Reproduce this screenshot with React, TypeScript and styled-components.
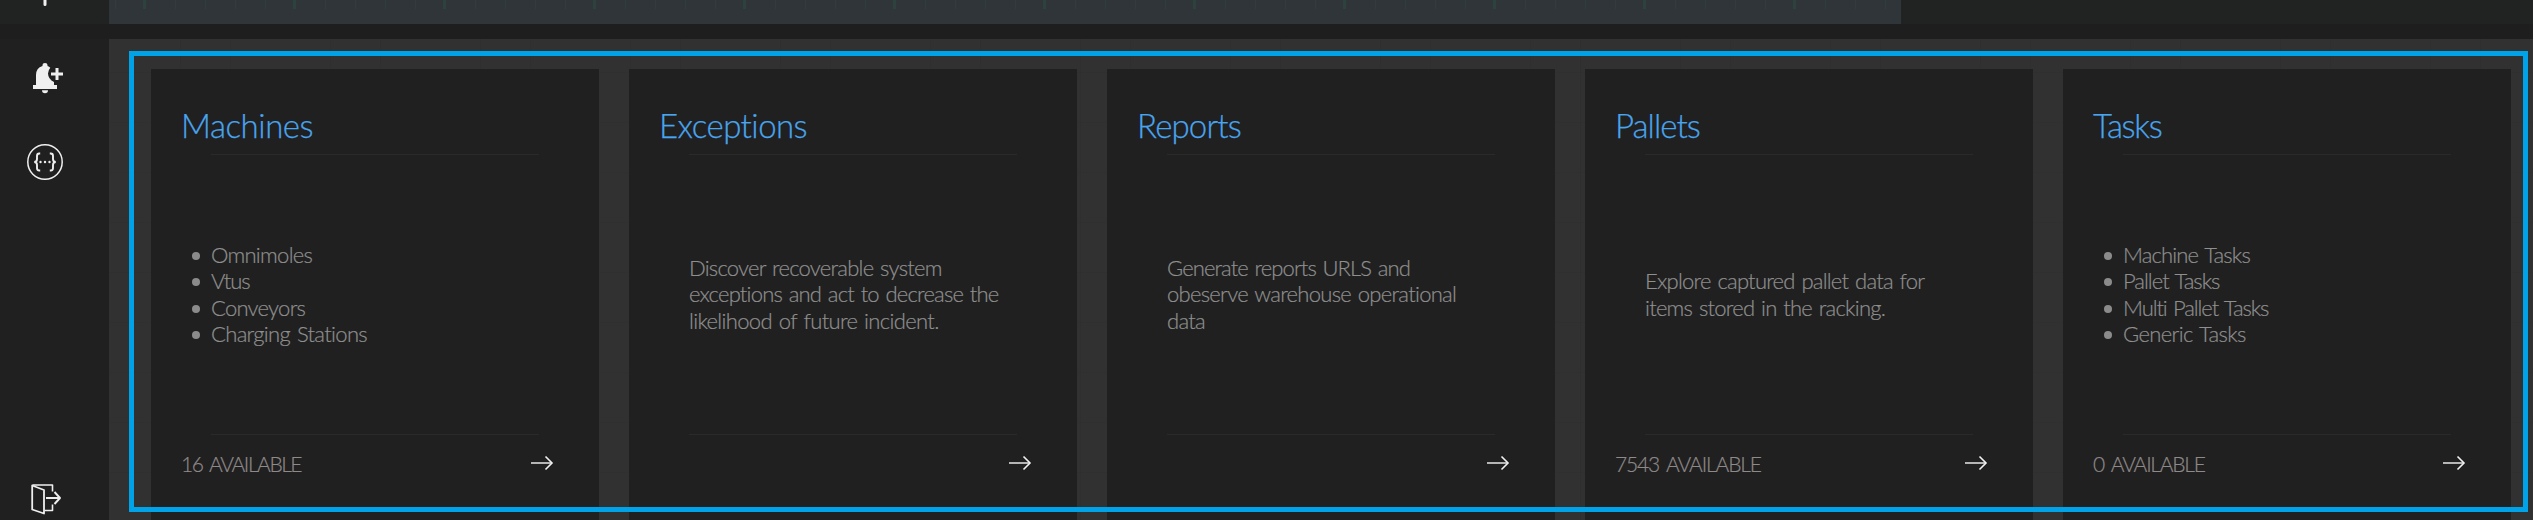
import React from 'react';
import styled, { createGlobalStyle } from 'styled-components';

const GlobalStyle = createGlobalStyle`
  * { box-sizing: border-box; }
  body {
    margin: 0;
    background: #202020;
    font-family: Lato, 'Liberation Sans', sans-serif;
    font-weight: 300;
    overflow: hidden;
  }
`;

const Page = styled.div`
  display: flex;
  width: 100%;
  height: 520px;
  overflow: hidden;
  background: #202020;
`;

const Sidebar = styled.nav`
  flex: 0 0 109px;
  display: flex;
  flex-direction: column;
  background: linear-gradient(#202321 24px, #1e1e1e 24px, #1e1e1e 39px, #202020 39px);
  color: #efefef;
`;

const NavItem = styled.a<{ $height: number; $left?: number }>`
  display: flex;
  height: ${(p) => p.$height}px;
  padding-left: ${(p) => p.$left ?? 0}px;
  width: 90px;
  align-items: flex-end;
  justify-content: center;
`;

const Spacer = styled.div`
  flex: 1;
`;

const SidebarEnd = styled.div`
  padding-bottom: 5px;
`;

const Icon = styled.svg`
  display: block;
  overflow: visible;
`;

const Column = styled.div`
  flex: 1;
  display: flex;
  flex-direction: column;
  min-width: 0;
`;

const Timeline = styled.div`
  height: 24px;
  background: #202321;
`;

const Track = styled.div`
  width: 1792px;
  height: 24px;
  background: #303539;
`;

const Ticks = styled.div`
  height: 9px;
  background:
    repeating-linear-gradient(90deg, transparent 0 34px, #2d423c 34px 37px, transparent 37px 150px),
    repeating-linear-gradient(90deg, transparent 0 6px, #313d3c 6px 7px, transparent 7px 30px);
`;

const Gap = styled.div`
  height: 15px;
  background: #1e1e1e;
`;

const Main = styled.main`
  position: relative;
  flex: 1;
  display: flex;
  gap: 30px;
  padding: 30px 22px 0 42px;
  background-color: #313131;
  background-image:
    repeating-linear-gradient(90deg, transparent 0 71px, rgba(0, 0, 0, 0.04) 71px 72px, transparent 72px 121px, rgba(0, 0, 0, 0.04) 121px 122px, transparent 122px 150px),
    repeating-linear-gradient(180deg, transparent 0 33px, rgba(0, 0, 0, 0.03) 33px 34px, transparent 34px 50px);
`;

const Card = styled.section`
  flex: 0 0 448px;
  display: flex;
  flex-direction: column;
  background: #202020;
`;

const Title = styled.h2`
  height: 85px;
  margin: 0;
  padding: 36px 0 0 30px;
  font-size: 33px;
  line-height: 40px;
  font-weight: 300;
  color: #49a5ee;
  -webkit-text-stroke: 0.25px #49a5ee;
  white-space: nowrap;
`;

const Divider = styled.hr`
  width: 328px;
  height: 1px;
  margin: 0 60px;
  border: 0;
  background: #2a2a2a;
`;

const Body = styled.div`
  height: 279px;
  display: flex;
  flex-direction: column;
  justify-content: center;
  padding-left: 60px;
  font-size: 22px;
  line-height: 26.2px;
  word-spacing: 1.5px;
  color: #8f8f8f;
  -webkit-text-stroke: 0.2px #8f8f8f;
`;

const Items = styled.ul`
  margin: 0;
  padding: 0;
  list-style: none;
`;

const Item = styled.li`
  display: flex;
  align-items: center;
  margin-left: -19px;
  &::before {
    content: '';
    width: 8px;
    height: 8px;
    margin: 2px 11px 0 0;
    border-radius: 50%;
    background: #8b8b8b;
  }
`;

const Copy = styled.p`
  margin: 0;
`;

const Line = styled.span<{ $track: number }>`
  display: block;
  white-space: nowrap;
  letter-spacing: ${(p) => p.$track}px;
`;

const Footer = styled.footer`
  display: flex;
  justify-content: space-between;
  padding: 16px 45px 0 30px;
  font-size: 21px;
  line-height: 26px;
  word-spacing: 3px;
  color: #8f8989;
  -webkit-text-stroke: 0.2px #8f8989;
`;

const Highlight = styled.div`
  position: absolute;
  inset: 12px 5px 8px 20px;
  border: 5px solid #00a2e8;
  pointer-events: none;
`;

type Text = [string, number];
type CardData = { title: Text; items?: Text[]; copy?: Text[]; count?: Text };

const cards: CardData[] = [
  {
    title: ['Machines', -0.45],
    items: [['Omnimoles', -0.7], ['Vtus', -1.1], ['Conveyors', -0.75], ['Charging Stations', -0.67]],
    count: ['16 AVAILABLE', -1.45],
  },
  {
    title: ['Exceptions', -0.55],
    copy: [
      ['Discover recoverable system', -0.76],
      ['exceptions and act to decrease the', -0.8],
      ['likelihood of future incident.', -0.66],
    ],
  },
  {
    title: ['Reports', -0.85],
    copy: [['Generate reports URLS and', -0.9], ['obeserve warehouse operational', -0.72], ['data', -0.7]],
  },
  {
    title: ['Pallets', -0.95],
    copy: [['Explore captured pallet data for', -0.76], ['items stored in the racking.', -0.75]],
    count: ['7543 AVAILABLE', -1.15],
  },
  {
    title: ['Tasks', -1.3],
    items: [['Machine Tasks', -0.85], ['Pallet Tasks', -1], ['Multi Pallet Tasks', -1.1], ['Generic Tasks', -0.62]],
    count: ['0 AVAILABLE', -1.25],
  },
];

const Stem = () => (
  <Icon width="4" height="6" viewBox="0 0 4 6">
    <path d="M.5 0h3v4.5a1.5 1.5 0 0 1-3 0z" fill="currentColor" />
  </Icon>
);

const BellPlus = () => (
  <Icon width="30" height="30" viewBox="0 0 30 30" fill="currentColor">
    <path d="M9.500 3V2a2.500 2 0 0 1 5 0v1q1.700.6 2.800 1.700Q15.200 7 15 10.500q.2 5.700 6 8.500V22h3v4H0v-4h3V12q0-7 6.500-9z" />
    <path d="M9 27.300h6a3 3 0 0 1-6 0z" />
    <path d="M22.500 5h3v4.500H30v3h-4.500V17h-3v-4.500H18v-3h4.500z" />
  </Icon>
);

const Braces = () => (
  <Icon width="36" height="36" viewBox="0 0 36 36" fill="none" stroke="currentColor">
    <circle cx="18" cy="18" r="17.200" strokeWidth="1.500" />
    <path
      d="M13.200 9.500h-1q-2.200 0-2.200 2.500v3q0 3-2.800 3 2.800 0 2.800 3v3q0 2.500 2.200 2.500h1M22.800 9.500h1q2.200 0 2.200 2.500v3q0 3 2.800 3-2.800 0-2.800 3v3q0 2.500-2.200 2.500h-1"
      strokeWidth="1.900"
    />
    <g fill="currentColor" stroke="none">
      <circle cx="13.500" cy="18" r="1.200" />
      <circle cx="18" cy="18" r="1.200" />
      <circle cx="22.500" cy="18" r="1.200" />
    </g>
  </Icon>
);

const Exit = () => (
  <Icon width="30" height="32" viewBox="0 0 30 32" fill="none" stroke="currentColor" strokeLinejoin="round">
    <path d="M1.200 2.500 13 7v23.500L1.200 26.500z" strokeWidth="1.800" />
    <path d="M1.500 2h20v6.500M13.500 27.500h8V21.500" strokeWidth="1.600" />
    <path d="M15 15h13.500M23.500 9l5.500 6-5.500 6" strokeWidth="1.900" />
  </Icon>
);

const Arrow = () => (
  <Icon width="24" height="24" viewBox="0 0 24 24" fill="none" stroke="#f1f1f1">
    <path d="M1 12h21" strokeWidth="1.700" stroke="#d0d0d0" />
    <path d="M15.500 5.500 22 12l-6.500 6.500" strokeWidth="1.600" />
  </Icon>
);

const Tracked = ({ text: [label, track] }: { text: Text }) => <Line $track={track}>{label}</Line>;

export default function App() {
  return (
    <Page>
      <GlobalStyle />
      <Sidebar>
        <NavItem $height={6}><Stem /></NavItem>
        <NavItem $height={87} $left={6}><BellPlus /></NavItem>
        <NavItem $height={87}><Braces /></NavItem>
        <Spacer />
        <SidebarEnd>
          <NavItem $height={38} $left={2}><Exit /></NavItem>
        </SidebarEnd>
      </Sidebar>
      <Column>
        <Timeline>
          <Track><Ticks /></Track>
        </Timeline>
        <Gap />
        <Main>
          {cards.map((card) => (
            <Card key={card.title[0]}>
              <Title><Tracked text={card.title} /></Title>
              <Divider />
              <Body>
                {card.items && (
                  <Items>
                    {card.items.map((t) => <Item key={t[0]}><Tracked text={t} /></Item>)}
                  </Items>
                )}
                {card.copy && <Copy>{card.copy.map((t) => <Tracked key={t[0]} text={t} />)}</Copy>}
              </Body>
              <Divider />
              <Footer>
                {card.count ? <Tracked text={card.count} /> : <span />}
                <Arrow />
              </Footer>
            </Card>
          ))}
          <Highlight />
        </Main>
      </Column>
    </Page>
  );
}
